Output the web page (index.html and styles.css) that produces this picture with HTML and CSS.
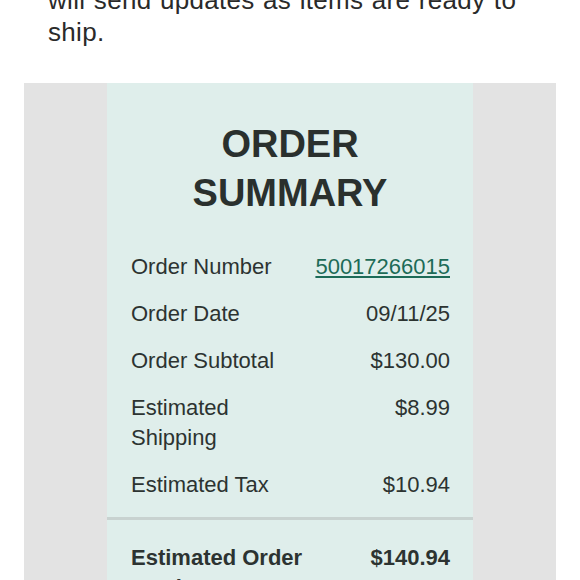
FILE: index.html
```html
<!DOCTYPE html>
<html lang="en">
<head>
<meta charset="utf-8">
<title>Order Summary</title>
<link rel="stylesheet" href="styles.css">
</head>
<body>
<div class="page">
  <p class="intro">will send updates as items are ready to ship.</p>
  <div class="frame">
    <div class="card">
      <h1 class="title">ORDER<br>SUMMARY</h1>
      <div class="rows">
        <div class="row"><div class="label">Order Number</div><div class="value"><a class="link" href="#">50017266015</a></div></div>
        <div class="row"><div class="label">Order Date</div><div class="value">09/11/25</div></div>
        <div class="row"><div class="label">Order Subtotal</div><div class="value">$130.00</div></div>
        <div class="row"><div class="label">Estimated Shipping</div><div class="value">$8.99</div></div>
        <div class="row"><div class="label">Estimated Tax</div><div class="value">$10.94</div></div>
      </div>
      <div class="total">
        <div class="row bold"><div class="label">Estimated Order Total</div><div class="value">$140.94</div></div>
      </div>
    </div>
  </div>
</div>
</body>
</html>
```
FILE: styles.css
```css
html, body {
  margin: 0;
  padding: 0;
  background: #ffffff;
  overflow: hidden;
}
body {
  font-family: "Liberation Sans", Arial, sans-serif;
}
.page {
  padding: 0 24px;
}
.intro {
  margin: -16px 0 0 0;
  padding: 0 24px;
  font-size: 26px;
  line-height: 32px;
  letter-spacing: 0.3px;
  word-spacing: 1px;
  color: #2a2a2a;
}
.frame {
  margin-top: 35px;
  background: #e3e3e3;
  padding: 0 83px;
}
.card {
  background: #dfeeeb;
  padding-top: 37px;
  min-height: 600px;
}
.title {
  margin: 0;
  text-align: center;
  font-size: 38px;
  line-height: 49px;
  font-weight: bold;
  color: #2a302e;
}
.rows {
  margin-top: 26px;
  padding: 0 23px 8px 24px;
}
.row {
  display: grid;
  grid-template-columns: 180px 1fr;
  padding: 8px 0 9px;
  font-size: 22px;
  line-height: 30px;
  color: #2c3331;
}
.value {
  text-align: right;
}
.link {
  color: #1c6b57;
  text-decoration: underline;
  text-underline-offset: 2px;
}
.total {
  border-top: 3px solid #c8d2d0;
  padding: 15px 23px 0 24px;
}
.bold {
  font-weight: bold;
}
```
